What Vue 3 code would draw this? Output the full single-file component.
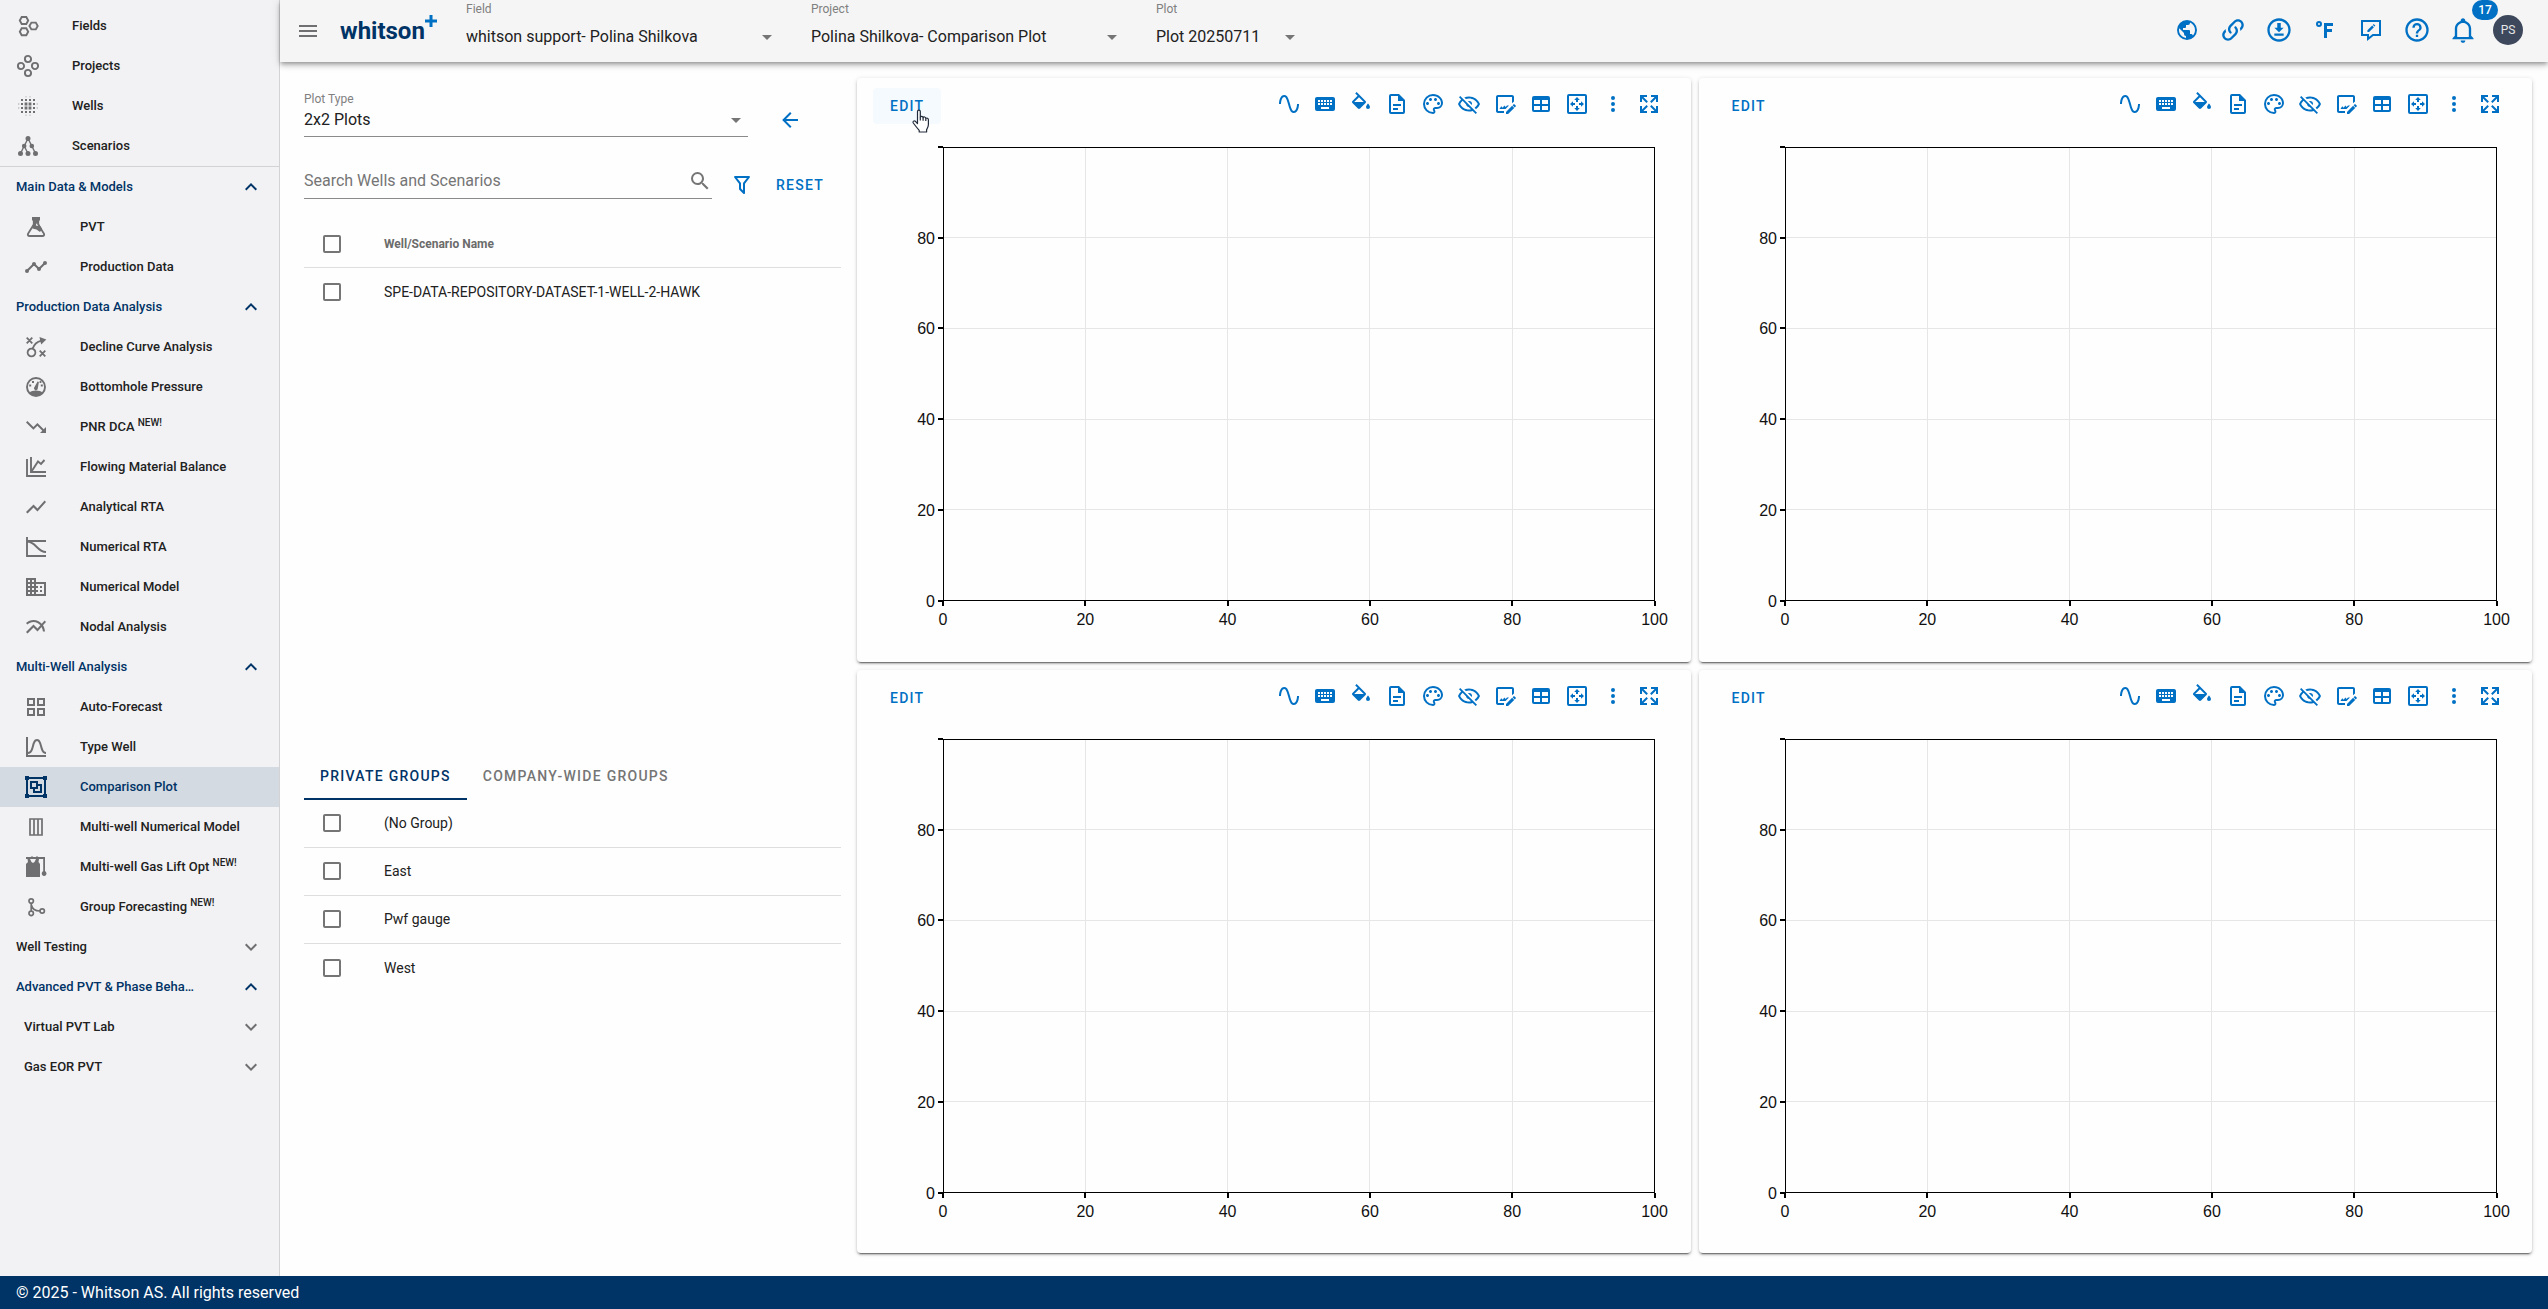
<script setup>
import { h, ref } from 'vue'

// f: filled outline, s: stroked line, w: stroke width (24 x 24 grid)
const icons = {
  menu: { f: 'M3,6H21V8H3V6M3,11H21V13H3V11M3,16H21V18H3V16Z' },
  hexes: { s: 'M5.7 3H10.3L12.2 6.5L10.3 10H5.7L3.8 6.5ZM5.7 14.2H10.3L12.2 17.7L10.3 21.2H5.7L3.8 17.7ZM15.4 8.6H19.8L21.7 12L19.8 15.4H15.4L13.4 12Z', w: 1.9 },
  circles: { s: 'M8.9 5a3.1 3.1 0 1 0 6.2 0a3.1 3.1 0 1 0 -6.2 0M1.9 12a3.1 3.1 0 1 0 6.2 0a3.1 3.1 0 1 0 -6.2 0M15.9 12a3.1 3.1 0 1 0 6.2 0a3.1 3.1 0 1 0 -6.2 0M8.9 19a3.1 3.1 0 1 0 6.2 0a3.1 3.1 0 1 0 -6.2 0', w: 1.9 },
  dots: { f: 'M5 5h2v2h-2zM9 5h2v2h-2zM13 5h2v2h-2zM17 5h2v2h-2zM5 9h2v2h-2zM8.6 8.6h2.8v2.8h-2.8zM12.6 8.6h2.8v2.8h-2.8zM17 9h2v2h-2zM5 13h2v2h-2zM8.6 12.6h2.8v2.8h-2.8zM12.6 12.6h2.8v2.8h-2.8zM17 13h2v2h-2zM5 17h2v2h-2zM9 17h2v2h-2zM13 17h2v2h-2zM17 17h2v2h-2zM9.6 2.4h.8v.8h-.8zM13.6 2.4h.8v.8h-.8zM9.6 20.8h.8v.8h-.8zM13.6 20.8h.8v.8h-.8zM2.4 9.6h.8v.8h-.8zM2.4 13.6h.8v.8h-.8zM20.8 9.6h.8v.8h-.8zM20.8 13.6h.8v.8h-.8z' },
  tree: { f: 'M9.5 4.5a2.5 2.5 0 1 0 5 0a2.5 2.5 0 1 0 -5 0M5.9 12a2.3 2.3 0 1 0 4.6 0a2.3 2.3 0 1 0 -4.6 0M13.5 12a2.3 2.3 0 1 0 4.6 0a2.3 2.3 0 1 0 -4.6 0M2 19.5a2.5 2.5 0 1 0 5 0a2.5 2.5 0 1 0 -5 0M9.5 19.5a2.5 2.5 0 1 0 5 0a2.5 2.5 0 1 0 -5 0M17 19.5a2.5 2.5 0 1 0 5 0a2.5 2.5 0 1 0 -5 0', s: 'M12 4.5L8.2 12L4.5 19.5M12 4.5L15.8 12L19.5 19.5M8.2 12L12 19.5', w: 1.4 },
  flask: { f: 'M8 2H16V5.5H15V9L18.2 14L16 17L12.5 14.5L8.4 13.6L9 9V5.5H8ZM12 9.8a1.2 1.2 0 1 0 2.4 0a1.2 1.2 0 1 0 -2.4 0', s: 'M9.8 5V9.5L4.1 18.6C3.5 19.8 4 21 5.5 21H18.5C20 21 20.5 19.8 19.9 18.6L14.2 9.5V5', w: 1.9 },
  timeline: { f: 'M3,14L3.5,14.07L8.07,9.5C7.89,8.85 8.06,8.11 8.59,7.59C9.37,6.8 10.63,6.8 11.41,7.59C11.94,8.11 12.11,8.85 11.93,9.5L14.5,12.07L15,12C15.18,12 15.35,12 15.5,12.07L19.07,8.5C19,8.35 19,8.18 19,8A2,2 0 0,1 21,6A2,2 0 0,1 23,8A2,2 0 0,1 21,10C20.82,10 20.65,10 20.5,9.93L16.93,13.5C17,13.65 17,13.82 17,14A2,2 0 0,1 15,16A2,2 0 0,1 13,14L13.07,13.5L10.5,10.93C10.18,11 9.82,11 9.5,10.93L4.93,15.5L5,16A2,2 0 0,1 3,18A2,2 0 0,1 1,16A2,2 0 0,1 3,14Z' },
  strategy: { f: 'M15.5 2L22.3 4.6L17.2 9.5L16.4 6.6Z', s: 'M2.7 2.7L8.3 8.3M8.3 2.7L2.7 8.3M15.7 15.7L21.3 21.3M21.3 15.7L15.7 21.3M3.6 17.5a3.9 3.9 0 1 0 7.8 0a3.9 3.9 0 1 0 -7.8 0M8.6 13.8C9.8 9.8 12.6 6.8 17.5 5.6', w: 1.8 },
  gauge: { f: 'M5 18C8.5 14.8 15.5 14.8 19 18C16.5 21.7 7.5 21.7 5 18ZM13.6 6.5L14.9 7L13.8 13.2A1.9 1.9 0 1 1 10.5 12.1ZM5.2 9.5h2v2h-2zM8 6h2v2h-2zM16.8 9.5h2v2h-2zM15.6 6h1.8v2h-1.8z', s: 'M3 12a9 9 0 1 0 18 0a9 9 0 1 0 -18 0', w: 1.9 },
  down: { f: 'M16,18L18.29,15.71L13.41,10.83L9.41,14.83L2,7.41L3.41,6L9.41,12L13.41,8L19.71,14.29L22,12V18H16Z' },
  flowing: { s: 'M3 4V21H22M7 2V17H22M7.5 16.5L14 6.5L17 9L20.5 5', w: 1.9 },
  line: { f: 'M3.5,18.5L9.5,12.5L13.5,16.5L22,6.92L20.59,5.5L13.5,13.5L9.5,9.5L2,17L3.5,18.5Z' },
  numrta: { s: 'M3 2V21H22M3 6H22M3 6.5C12 6.5 13 17 22 17', w: 1.9 },
  domain: { f: 'M18,15H16V17H18M18,11H16V13H18M20,19H12V17H14V15H12V13H14V11H12V9H20M10,7H8V5H10M10,11H8V9H10M10,15H8V13H10M10,19H8V17H10M6,7H4V5H6M6,11H4V9H6M6,15H4V13H6M6,19H4V17H6M12,7V3H2V21H22V7H12Z' },
  multiline: { f: 'M22 6.92l-1.41-1.41-2.85 3.21C15.68 6.4 12.83 5 9.61 5 6.72 5 4.07 6.16 2 8l1.42 1.42C5.12 7.93 7.27 7 9.61 7c2.74 0 5.09 1.26 6.77 3.24l-2.88 3.24-4-4L2 16.99l1.5 1.5 6-6.01 4 4 4.05-4.55c.75 1.35 1.25 2.9 1.44 4.55H21c-.22-2.3-.95-4.39-2.04-6.14L22 6.92z' },
  grid: { f: 'M3 11H11V3H3M5 5H9V9H5M13 21H21V13H13M15 15H19V19H15M3 21H11V13H3M5 15H9V19H5M13 3V11H21V3M19 9H15V5H19Z' },
  bell_curve: { f: 'M9.96,11.31C10.82,8.1 11.5,6 13,6C14.5,6 15.18,8.1 16.04,11.31C17,14.92 18.1,19 22,19V17C19.8,17 19,14.54 17.97,10.8C17.08,7.46 16.15,4 13,4C9.85,4 8.92,7.46 8.03,10.8C7.03,14.54 6.2,17 4,17V2H2V22H22V20H4V19C7.9,19 9,14.92 9.96,11.31Z' },
  group: { f: 'M1,1V5H2V19H1V23H5V22H19V23H23V19H22V5H23V1H19V2H5V1M5,4H19V5H20V19H19V20H5V19H4V5H5M6,6V14H9V18H18V9H14V6M8,8H12V12H8M14,11H16V16H11V14H14' },
  columns: { s: 'M6 4H18V20H6ZM10 4V20M14 4V20', w: 1.7 },
  gaslift: { f: 'M2 2H7V1.5H9V2H12V1.5H14V2H21V16.3A2.4 2.4 0 1 1 19.2 16.3V4H15L14.5 7L16 9V22H2V9L4 7L3.5 4H2ZM6 4L7.5 7L9 8L10.5 7L12 4Z' },
  merge: { s: 'M5 6a2.2 2.2 0 1 0 4.4 0a2.2 2.2 0 1 0 -4.4 0M5 18.4a2.2 2.2 0 1 0 4.4 0a2.2 2.2 0 1 0 -4.4 0M16 16a2.2 2.2 0 1 0 4.4 0a2.2 2.2 0 1 0 -4.4 0M7.2 8.2V16.2M7.4 10C8.2 14.6 11.5 16 16 16', w: 1.7 },
  up: { f: 'M7.41,15.41L12,10.83L16.59,15.41L18,14L12,8L6,14L7.41,15.41Z' },
  chevron: { f: 'M7.41,8.58L12,13.17L16.59,8.58L18,10L12,16L6,10L7.41,8.58Z' },
  caret: { f: 'M7,10L12,15L17,10H7Z' },
  back: { f: 'M20,11V13H8L13.5,18.5L12.08,19.92L4.16,12L12.08,4.08L13.5,5.5L8,11H20Z' },
  search: { f: 'M9.5,3A6.5,6.5 0 0,1 16,9.5C16,11.11 15.41,12.59 14.44,13.73L14.71,14H15.5L20.5,19L19,20.5L14,15.5V14.71L13.73,14.44C12.59,15.41 11.11,16 9.5,16A6.5,6.5 0 0,1 3,9.5A6.5,6.5 0 0,1 9.5,3M9.5,5C7,5 5,7 5,9.5C5,12 7,14 9.5,14C12,14 14,12 14,9.5C14,7 12,5 9.5,5Z' },
  filter: { f: 'M15,19.88C15.04,20.18 14.94,20.5 14.71,20.71C14.32,21.1 13.69,21.1 13.3,20.71L9.29,16.7C9.06,16.47 8.96,16.16 9,15.87V10.75L4.21,4.62C3.87,4.19 3.95,3.56 4.38,3.22C4.57,3.08 4.78,3 5,3H19C19.22,3 19.43,3.08 19.62,3.22C20.05,3.56 20.13,4.19 19.79,4.62L15,10.75V19.88M7.04,5L11,10.06V15.58L13,17.58V10.05L16.96,5H7.04Z' },
  sine: { f: 'M16.5,21C13.5,21 12.31,16.76 11.05,12.28C10.14,9.04 9,5 7.5,5C4.11,5 4,11.93 4,12H2C2,11.63 2.06,3 7.5,3C10.5,3 11.71,7.25 12.97,11.74C13.83,14.8 15,19 16.5,19C19.94,19 20.03,12.07 20.03,12H22.03C22.03,12.37 21.97,21 16.5,21Z' },
  keyboard: { f: 'M19,10H17V8H19M19,13H17V11H19M16,10H14V8H16M16,13H14V11H16M16,17H8V15H16M7,10H5V8H7M7,13H5V11H7M8,11H10V13H8M8,8H10V10H8M11,11H13V13H11M11,8H13V10H11M20,5H4C2.89,5 2,5.89 2,7V17A2,2 0 0,0 4,19H20A2,2 0 0,0 22,17V7C22,5.89 21.1,5 20,5Z' },
  fill: { f: 'M19,11.5C19,11.5 17,13.67 17,15A2,2 0 0,0 19,17A2,2 0 0,0 21,15C21,13.67 19,11.5 19,11.5M5.21,10L10,5.21L14.79,10M16.56,8.94L7.62,0L6.21,1.41L8.59,3.79L3.44,8.94C2.85,9.5 2.85,10.47 3.44,11.06L8.94,16.56C9.23,16.85 9.62,17 10,17C10.38,17 10.77,16.85 11.06,16.56L16.56,11.06C17.15,10.47 17.15,9.5 16.56,8.94Z' },
  document: { f: 'M6,2A2,2 0 0,0 4,4V20A2,2 0 0,0 6,22H18A2,2 0 0,0 20,20V8L14,2H6M6,4H13V9H18V20H6V4M8,12V14H16V12H8M8,16V18H13V16H8Z' },
  palette: { f: 'M12,22A10,10 0 0,1 2,12A10,10 0 0,1 12,2C17.5,2 22,6 22,11A6,6 0 0,1 16,17H14.2C13.9,17 13.7,17.2 13.7,17.5C13.7,17.6 13.8,17.7 13.8,17.8C14.2,18.3 14.4,18.9 14.4,19.5C14.5,20.9 13.4,22 12,22M12,4A8,8 0 0,0 4,12A8,8 0 0,0 12,20C12.3,20 12.5,19.8 12.5,19.5C12.5,19.3 12.4,19.2 12.4,19.1C12,18.6 11.8,18.1 11.8,17.5C11.8,16.1 12.9,15 14.3,15H16A4,4 0 0,0 20,11C20,7.1 16.4,4 12,4M6.5,10C7.3,10 8,10.7 8,11.5C8,12.3 7.3,13 6.5,13C5.7,13 5,12.3 5,11.5C5,10.7 5.7,10 6.5,10M9.5,6C10.3,6 11,6.7 11,7.5C11,8.3 10.3,9 9.5,9C8.7,9 8,8.3 8,7.5C8,6.7 8.7,6 9.5,6M14.5,6C15.3,6 16,6.7 16,7.5C16,8.3 15.3,9 14.5,9C13.7,9 13,8.3 13,7.5C13,6.7 13.7,6 14.5,6M17.5,10C18.3,10 19,10.7 19,11.5C19,12.3 18.3,13 17.5,13C16.7,13 16,12.3 16,11.5C16,10.7 16.7,10 17.5,10Z' },
  eyeoff: { f: 'M2,5.27L3.28,4L20,20.72L18.73,22L15.65,18.92C14.5,19.3 13.28,19.5 12,19.5C7,19.5 2.73,16.39 1,12C1.69,10.24 2.79,8.69 4.19,7.46L2,5.27M12,9A3,3 0 0,1 15,12C15,12.35 14.94,12.69 14.83,13L11,9.17C11.31,9.06 11.65,9 12,9M12,4.5C17,4.5 21.27,7.61 23,12C22.18,14.08 20.79,15.88 19,17.19L17.58,15.76C18.94,14.82 20.06,13.54 20.82,12C19.17,8.64 15.76,6.5 12,6.5C10.91,6.5 9.84,6.68 8.84,7L7.3,5.47C8.74,4.85 10.33,4.5 12,4.5M3.18,12C4.83,15.36 8.24,17.5 12,17.5C12.69,17.5 13.37,17.43 14,17.29L11.72,15C10.29,14.85 9.15,13.71 9,12.28L5.6,8.87C4.61,9.72 3.78,10.78 3.18,12Z' },
  imageedit: { f: 'M22.7 14.4L21.7 15.4L19.6 13.3L20.6 12.3C20.8 12.1 21.2 12.1 21.4 12.3L22.7 13.6C22.9 13.8 22.9 14.2 22.7 14.4M13 19.9V22H15.1L21.2 15.9L19.1 13.8L13 19.9M11 21H5C3.9 21 3 20.11 3 19V5C3 3.9 3.9 3 5 3H19C20.11 3 21 3.9 21 5V9.4L19 11.3V5H5V19H11V21M6.5 17L8.2 14.2L9.8 15.8L11.3 13.6L12.6 15L14 13.5H16L12.5 17Z' },
  table: { f: 'M5,4H19A2,2 0 0,1 21,6V18A2,2 0 0,1 19,20H5A2,2 0 0,1 3,18V6A2,2 0 0,1 5,4M5,8V12H11V8H5M13,8V12H19V8H13M5,14V18H11V14H5M13,14V18H19V14H13Z' },
  fit: { f: 'M4 2H20A2 2 0 0 1 22 4V20A2 2 0 0 1 20 22H4A2 2 0 0 1 2 20V4A2 2 0 0 1 4 2M4 4V20H20V4ZM12 5L14.8 8H13V10H11V8H9.2ZM12 19L9.2 16H11V14H13V16H14.8ZM5 12L8 9.2V11H10V13H8V14.8ZM19 12L16 14.8V13H14V11H16V9.2Z' },
  more: { f: 'M10 6a2 2 0 1 0 4 0a2 2 0 1 0 -4 0M10 12a2 2 0 1 0 4 0a2 2 0 1 0 -4 0M10 18a2 2 0 1 0 4 0a2 2 0 1 0 -4 0' },
  expand: { f: 'M9.5,13.09L10.91,14.5L6.41,19H10V21H3V14H5V17.59L9.5,13.09M10.91,9.5L9.5,10.91L5,6.41V10H3V3H10V5H6.41L10.91,9.5M14.5,13.09L19,17.59V14H21V21H14V19H17.59L13.09,14.5L14.5,13.09M13.09,9.5L17.59,5H14V3H21V10H19V6.41L14.5,10.91L13.09,9.5Z' },
  earth: { f: 'M17.9,17.39C17.64,16.59 16.89,16 16,16H15V13A1,1 0 0,0 14,12H8V10H10A1,1 0 0,0 11,9V7H13A2,2 0 0,0 15,5V4.59C17.93,5.77 20,8.64 20,12C20,14.08 19.2,15.97 17.9,17.39M11,19.93C7.05,19.44 4,16.08 4,12C4,11.38 4.08,10.78 4.21,10.21L9,15V16A2,2 0 0,0 11,18M12,2A10,10 0 0,0 2,12A10,10 0 0,0 12,22A10,10 0 0,0 22,12A10,10 0 0,0 12,2Z' },
  link: { f: 'M10.59,13.41C11,13.8 11,14.44 10.59,14.83C10.2,15.22 9.56,15.22 9.17,14.83C7.22,12.88 7.22,9.71 9.17,7.76L12.71,4.22C14.66,2.27 17.83,2.27 19.78,4.22C21.73,6.17 21.73,9.34 19.78,11.29L18.29,12.78C18.3,11.96 18.17,11.14 17.89,10.36L18.36,9.88C19.54,8.71 19.54,6.81 18.36,5.64C17.19,4.46 15.29,4.46 14.12,5.64L10.59,9.17C9.41,10.34 9.41,12.24 10.59,13.41M13.41,9.17C13.8,8.78 14.44,8.78 14.83,9.17C16.78,11.12 16.78,14.29 14.83,16.24L11.29,19.78C9.34,21.73 6.17,21.73 4.22,19.78C2.27,17.83 2.27,14.66 4.22,12.71L5.71,11.22C5.7,12.04 5.83,12.86 6.11,13.65L5.64,14.12C4.46,15.29 4.46,17.19 5.64,18.36C6.81,19.54 8.71,19.54 9.88,18.36L13.41,14.83C14.59,13.66 14.59,11.76 13.41,10.59C13,10.2 13,9.56 13.41,9.17Z' },
  download: { f: 'M8 17V15H16V17H8M16 10L12 14L8 10H10.5V6H13.5V10H16M12 2C17.5 2 22 6.5 22 12C22 17.5 17.5 22 12 22C6.5 22 2 17.5 2 12C2 6.5 6.5 2 12 2M12 4C7.58 4 4 7.58 4 12C4 16.42 7.58 20 12 20C16.42 20 20 16.42 20 12C20 7.58 16.42 4 12 4Z' },
  fahrenheit: { f: 'M11,20V5H20V8H14V11H19V14H14V20H11M6,3A3,3 0 0,1 9,6A3,3 0 0,1 6,9A3,3 0 0,1 3,6A3,3 0 0,1 6,3M6,5A1,1 0 0,0 5,6A1,1 0 0,0 6,7A1,1 0 0,0 7,6A1,1 0 0,0 6,5Z' },
  feedback: { f: 'M8.4 14V12.3L13.2 7.5L14.9 9.2L10.1 14ZM13.8 6.9L14.7 6L16.4 7.7L15.5 8.6Z', s: 'M3 3H21V17H14L9 21V17H3Z', w: 2 },
  help: { f: 'M11,18H13V16H11V18M12,2A10,10 0 0,0 2,12A10,10 0 0,0 12,22A10,10 0 0,0 22,12A10,10 0 0,0 12,2M12,20C7.59,20 4,16.41 4,12C4,7.59 7.59,4 12,4C16.41,4 20,7.59 20,12C20,16.41 16.41,20 12,20M12,6A4,4 0 0,0 8,10H10A2,2 0 0,1 12,8A2,2 0 0,1 14,10C14,12 11,11.75 11,15H13C13,12.75 16,12.5 16,10A4,4 0 0,0 12,6Z' },
  bell: { f: 'M10 21H14C14 22.1 13.1 23 12 23S10 22.1 10 21M21 19V20H3V19L5 17V11C5 7.9 7 5.2 10 4.3V4C10 2.9 10.9 2 12 2S14 2.9 14 4V4.3C17 5.2 19 7.9 19 11V17L21 19M17 11C17 8.2 14.8 6 12 6S7 8.2 7 11V18H17V11Z' },
}

const Icon = (props) => {
  const icon = icons[props.name]
  const size = props.size || 24
  return h('svg', { width: size, height: size, viewBox: '0 0 24 24', 'aria-hidden': 'true' }, [
    icon.f && h('path', { d: icon.f, fill: 'currentColor', 'fill-rule': 'evenodd' }),
    icon.s && h('path', { d: icon.s, fill: 'none', stroke: 'currentColor', 'stroke-width': icon.w }),
  ])
}
Icon.props = ['name', 'size']

const topLinks = [
  { icon: 'hexes', label: 'Fields' },
  { icon: 'circles', label: 'Projects' },
  { icon: 'dots', label: 'Wells' },
  { icon: 'tree', label: 'Scenarios' },
]

const sections = [
  { title: 'Main Data & Models', open: true, items: [
    { icon: 'flask', label: 'PVT' },
    { icon: 'timeline', label: 'Production Data' },
  ] },
  { title: 'Production Data Analysis', open: true, items: [
    { icon: 'strategy', label: 'Decline Curve Analysis' },
    { icon: 'gauge', label: 'Bottomhole Pressure' },
    { icon: 'down', label: 'PNR DCA', fresh: true },
    { icon: 'flowing', label: 'Flowing Material Balance' },
    { icon: 'line', label: 'Analytical RTA' },
    { icon: 'numrta', label: 'Numerical RTA' },
    { icon: 'domain', label: 'Numerical Model' },
    { icon: 'multiline', label: 'Nodal Analysis' },
  ] },
  { title: 'Multi-Well Analysis', open: true, items: [
    { icon: 'grid', label: 'Auto-Forecast' },
    { icon: 'bell_curve', label: 'Type Well' },
    { icon: 'group', label: 'Comparison Plot', active: true },
    { icon: 'columns', label: 'Multi-well Numerical Model' },
    { icon: 'gaslift', label: 'Multi-well Gas Lift Opt', fresh: true },
    { icon: 'merge', label: 'Group Forecasting', fresh: true },
  ] },
  { title: 'Well Testing', open: false, items: [] },
  { title: 'Advanced PVT & Phase Beha…', open: true, items: [], children: ['Virtual PVT Lab', 'Gas EOR PVT'] },
]

const pickers = [
  { id: 'field', label: 'Field', value: 'whitson support- Polina Shilkova' },
  { id: 'project', label: 'Project', value: 'Polina Shilkova- Comparison Plot' },
  { id: 'plot', label: 'Plot', value: 'Plot 20250711', narrow: true },
]

const actions = [
  { icon: 'earth', label: 'Language', size: 24 },
  { icon: 'link', label: 'Copy link', size: 28 },
  { icon: 'download', label: 'Download', size: 28 },
  { icon: 'fahrenheit', label: 'Units', size: 24 },
  { icon: 'feedback', label: 'Feedback', size: 24 },
  { icon: 'help', label: 'Help', size: 28 },
  { icon: 'bell', label: 'Notifications', size: 28, badge: 17 },
]

const tools = [
  ['sine', 'Curves'], ['keyboard', 'Shortcuts'], ['fill', 'Fill'], ['document', 'Notes'],
  ['palette', 'Colors'], ['eyeoff', 'Hide'], ['imageedit', 'Edit image'], ['table', 'Table'],
  ['fit', 'Fit'], ['more', 'More'], ['expand', 'Full screen'],
]

const groups = ['(No Group)', 'East', 'Pwf gauge', 'West']
const ticks = [0, 20, 40, 60, 80, 100]
const search = ref('')
</script>

<template>
  <div class="app">
    <div class="shell">
      <nav class="sidebar">
        <div class="top-links">
          <a v-for="l in topLinks" :key="l.label" href="#" class="row link top">
            <Icon :name="l.icon" /><span>{{ l.label }}</span>
          </a>
        </div>
        <template v-for="s in sections" :key="s.title">
          <button type="button" class="row heading" :class="{ open: s.open }">
            <span>{{ s.title }}</span><Icon :name="s.open ? 'up' : 'chevron'" />
          </button>
          <a v-for="i in s.items" :key="i.label" href="#" class="row link" :class="{ active: i.active }">
            <Icon :name="i.icon" /><span>{{ i.label }} <sup v-if="i.fresh">NEW!</sup></span>
          </a>
          <button v-for="c in s.children" :key="c" type="button" class="row heading nested">
            <span>{{ c }}</span><Icon name="chevron" />
          </button>
        </template>
      </nav>

      <div class="main">
        <header class="bar">
          <button type="button" class="icon-btn menu" aria-label="Menu"><Icon name="menu" /></button>
          <a href="#" class="logo">whitson<svg class="plus" width="12" height="12" viewBox="0 0 12 12" aria-hidden="true"><path d="M4.5 0h3v4.5H12v3H7.5V12h-3V7.5H0v-3h4.5z" fill="currentColor" /></svg></a>
          <div class="pickers">
            <div v-for="p in pickers" :key="p.id" class="picker" :class="{ narrow: p.narrow }">
              <label :for="p.id">{{ p.label }}</label>
              <div class="select">
                <select :id="p.id"><option>{{ p.value }}</option></select>
                <Icon name="caret" class="caret" />
              </div>
            </div>
          </div>
          <div class="actions">
            <button v-for="a in actions" :key="a.icon" type="button" class="icon-btn action" :aria-label="a.label">
              <Icon :name="a.icon" :size="a.size" />
              <span v-if="a.badge" class="badge">{{ a.badge }}</span>
            </button>
            <button type="button" class="avatar">PS</button>
          </div>
        </header>

        <div class="content">
          <aside class="panel">
            <div class="type-row">
              <div class="plot-type">
                <label for="type">Plot Type</label>
                <div class="select">
                  <select id="type"><option>2x2 Plots</option></select>
                  <Icon name="caret" class="caret" />
                </div>
              </div>
              <button type="button" class="icon-btn blue" aria-label="Collapse"><Icon name="back" /></button>
            </div>
            <div class="search-row">
              <div class="search">
                <input v-model="search" type="text" placeholder="Search Wells and Scenarios" aria-label="Search Wells and Scenarios" />
                <Icon name="search" />
              </div>
              <button type="button" class="icon-btn blue filter" aria-label="Filter"><Icon name="filter" /></button>
              <button type="button" class="text-btn reset">RESET</button>
            </div>
            <div class="wells">
              <table>
                <thead>
                  <tr><th class="tick"><input type="checkbox" aria-label="Select all" /></th><th>Well/Scenario Name</th></tr>
                </thead>
                <tbody>
                  <tr>
                    <td class="tick"><input id="well-1" type="checkbox" /></td>
                    <td><label for="well-1">SPE-DATA-REPOSITORY-DATASET-1-WELL-2-HAWK</label></td>
                  </tr>
                </tbody>
              </table>
            </div>
            <div class="groups">
              <div class="tabs" role="tablist">
                <button type="button" role="tab" class="tab selected" aria-selected="true">PRIVATE GROUPS</button>
                <button type="button" role="tab" class="tab" aria-selected="false">COMPANY-WIDE GROUPS</button>
              </div>
              <table>
                <tbody>
                  <tr v-for="(g, n) in groups" :key="g">
                    <td class="tick"><input :id="'group-' + n" type="checkbox" /></td>
                    <td><label :for="'group-' + n">{{ g }}</label></td>
                  </tr>
                </tbody>
              </table>
            </div>
          </aside>

          <main class="plots">
            <section v-for="n in 4" :key="n" class="card">
              <div class="toolbar">
                <button type="button" class="text-btn edit" :class="{ hovered: n === 1 }">
                  EDIT
                  <svg v-if="n === 1" class="pointer" width="18" height="24" viewBox="0 0 18 24" aria-hidden="true">
                    <path d="M5.5 14.5V2.6C5.5 .6 8.3 .6 8.3 2.6V8.3C8.6 6.9 11 7 11.1 8.6C11.7 7.5 13.7 7.8 13.8 9.4C14.7 8.7 16.4 9.2 16.4 10.8V15.5C16.4 18 15 19.5 14.6 20.8V23H7.2V21.3C5.5 19.5 3.5 17 1.3 14C.4 12.4 2.2 11.2 3.4 12.3Z" fill="#fff" stroke="#222b3a" stroke-width="1.2" stroke-linejoin="round" />
                    <path d="M8.3 8.3V11.5M11.1 8.6V11.8M13.8 9.4V12" fill="none" stroke="#222b3a" stroke-width="1.2" />
                  </svg>
                </button>
                <div class="tools">
                  <button v-for="t in tools" :key="t[0]" type="button" class="icon-btn tool" :aria-label="t[1]"><Icon :name="t[0]" /></button>
                </div>
              </div>
              <div class="chart">
                <svg class="plot" width="100%" height="100%">
                  <g class="gridlines">
                    <template v-for="t in ticks.slice(1, 5)" :key="t">
                      <line :x1="t + '%'" :x2="t + '%'" y1="0" y2="100%" />
                      <line x1="0" x2="100%" :y1="t + '%'" :y2="t + '%'" />
                    </template>
                  </g>
                  <rect class="frame" width="100%" height="100%" />
                  <g v-for="t in ticks" :key="t" class="axis">
                    <svg :x="t + '%'" y="100%" overflow="visible">
                      <line y1="0" y2="5" /><text y="24" text-anchor="middle">{{ t }}</text>
                    </svg>
                    <svg x="0" :y="100 - t + '%'" overflow="visible">
                      <line x1="-5" x2="0" /><text v-if="t < 100" x="-8" y="6" text-anchor="end">{{ t }}</text>
                    </svg>
                  </g>
                </svg>
              </div>
            </section>
          </main>
        </div>
      </div>
    </div>
    <footer class="footer">© 2025 - Whitson AS. All rights reserved</footer>
  </div>
</template>

<style>
body { background: #fefefe; }
</style>

<style scoped>
.app {
  min-height: 100vh;
  display: flex;
  flex-direction: column;
  font-family: Roboto, "Liberation Sans", sans-serif;
  color: #212121;
}
.app * { box-sizing: border-box; }
button, input, select { font-family: inherit; color: inherit; }
button { border: 0; padding: 0; background: none; cursor: pointer; }
a { text-decoration: none; color: inherit; }
svg { display: block; flex: none; }
.shell { flex: 1; display: flex; }

.sidebar {
  flex: 0 0 280px;
  background: #f2f2f4;
  border-right: 1px solid #d3d3d5;
  font-size: 13px;
  font-weight: 500;
}
.top-links { padding-top: 6px; border-bottom: 1px solid #d3d3d5; }
.row {
  display: flex;
  align-items: center;
  width: 100%;
  height: 40px;
  font-size: 13px;
  font-weight: 500;
  line-height: 20px;
}
.link { gap: 32px; padding: 0 24px; white-space: nowrap; }
.link.top { padding: 0 16px; }
.link svg { color: #6f6f71; }
.link.active { background: #d3dae1; color: #003366; }
.link.active svg { color: #003366; }
sup { font-size: 10px; line-height: 0; }
.heading { justify-content: space-between; padding: 0 16px; text-align: left; white-space: nowrap; }
.heading svg { color: #6f6f71; }
.heading.open, .heading.open svg { color: #003366; }
.heading.nested { padding-left: 24px; }

.main { flex: 1; min-width: 0; display: flex; flex-direction: column; }
.bar {
  position: relative;
  display: flex;
  align-items: center;
  height: 62px;
  padding: 0 25px 0 16px;
  background: #f5f5f5;
  box-shadow: 0 2px 4px -1px rgba(0, 0, 0, .3), 0 4px 5px rgba(0, 0, 0, .14), 0 1px 10px rgba(0, 0, 0, .12);
}
.icon-btn { display: flex; align-items: center; justify-content: center; flex: none; }
.menu { color: #6f6f71; }
.logo {
  display: flex;
  align-items: center;
  width: 126px;
  margin-left: 20px;
  font-size: 24px;
  line-height: 32px;
  font-weight: 700;
  color: #003366;
}
.plus { color: #0070c4; align-self: flex-start; }
.pickers { display: flex; gap: 32px; align-self: flex-start; }
.picker { width: 313px; }
.picker.narrow { width: 146px; }
label { display: block; }
.picker > label, .plot-type > label { font-size: 12px; line-height: 18px; color: #808080; }
.select { position: relative; }
select {
  display: block;
  width: 100%;
  padding: 0;
  border: 0;
  background: none;
  appearance: none;
  font-size: 16px;
  line-height: 24px;
}
.picker select { margin-top: 7px; }
.caret { position: absolute; right: 0; bottom: 0; color: #757575; pointer-events: none; }
.actions { display: flex; align-items: center; gap: 18px; margin-left: auto; padding-bottom: 2px; color: #0070c4; }
.action { position: relative; width: 28px; height: 28px; }
.badge {
  position: absolute;
  left: 23px;
  top: -16px;
  width: 26px;
  height: 20px;
  border-radius: 10px;
  background: #0070c4;
  color: #fff;
  font-size: 12px;
  line-height: 20px;
  font-weight: 500;
}
.avatar { width: 30px; height: 30px; margin-left: -2px; border-radius: 50%; background: #3e485c; color: #e4e6ea; font-size: 12px; }

.content { flex: 1; display: flex; gap: 16px; padding: 16px 16px 23px 24px; }
.panel { flex: 0 0 537px; display: flex; flex-direction: column; }
.type-row { display: flex; align-items: flex-start; gap: 30px; padding-top: 12px; }
.plot-type { flex: 0 0 444px; height: 47px; border-bottom: 1px solid #8a8a8a; }
.type-row .icon-btn { margin-top: 18px; }
.blue { color: #0070c4; }
.search-row { display: flex; align-items: center; height: 83px; padding-top: 12px; }
.search {
  flex: 0 0 408px;
  display: flex;
  align-items: center;
  height: 38px;
  padding-top: 4px;
  border-bottom: 1px solid #8a8a8a;
  color: #757575;
  margin-bottom: 10px;
}
.search input { flex: 1; min-width: 0; padding: 0; border: 0; outline: 0; background: none; font-size: 16px; line-height: 24px; color: #212121; }
.search input::placeholder { color: #757575; opacity: 1; }
.filter { margin-left: 18px; }
.text-btn { font-size: 14px; line-height: 36px; font-weight: 500; letter-spacing: 0.09em; color: #0070c4; }
.reset { margin-left: 22px; }
.wells { flex: 1 1 0; margin-bottom: 30px; }
.groups { flex: 1 1 0; }
table { width: 100%; border-collapse: separate; border-spacing: 0; }
th, td { height: 48px; padding: 0; text-align: left; font-size: 14px; line-height: 20px; font-weight: 400; }
th { font-size: 12px; font-weight: 700; color: #6b6b6b; }
.tick { width: 80px; padding-left: 19px; }
th, .groups tr:not(:last-child) td { border-bottom: 1px solid #dedede; }
input[type="checkbox"] {
  display: block;
  width: 18px;
  height: 18px;
  margin: 0;
  border: 2px solid #757575;
  border-radius: 2px;
  appearance: none;
}
.tabs { display: flex; }
.tab { height: 48px; padding: 2px 16px 0; font-size: 14px; font-weight: 500; letter-spacing: 0.09em; color: #757575; border-bottom: 2px solid transparent; }
.tab.selected { color: #003366; border-bottom-color: #003366; }

.plots { flex: 1; min-width: 0; display: grid; grid-template-columns: 1fr 1fr; grid-template-rows: 1fr 1fr; gap: 8px; }
.card {
  display: flex;
  flex-direction: column;
  min-width: 0;
  border-radius: 4px;
  background: #fefefe;
  box-shadow: 0 3px 1px -2px rgba(0, 0, 0, .4), 0 2px 2px rgba(0, 0, 0, .2), 0 1px 5px rgba(0, 0, 0, .14);
}
.toolbar { display: flex; justify-content: space-between; padding: 10px 24px 0 16px; }
.edit { position: relative; height: 36px; padding: 0 17px; border-radius: 4px; }
.edit.hovered { background: #f5faff; }
.pointer { position: absolute; left: 39px; top: 21px; }
.tools { display: flex; color: #0070c4; }
.tool { width: 36px; height: 32px; }
.chart { flex: 1; display: flex; padding: 23px 36px 61px 86px; min-height: 200px; }
.plot { flex: 1; min-width: 0; height: auto; overflow: visible; }
.gridlines line { stroke: #e6e6e6; shape-rendering: crispEdges; }
.frame { fill: none; stroke: #000; shape-rendering: crispEdges; }
.axis line { stroke: #000; stroke-width: 2; shape-rendering: crispEdges; }
.axis svg { display: inline; }
.axis text { font-family: "Liberation Sans", Arial, sans-serif; font-size: 16px; fill: #111; }

.footer { height: 33px; padding: 0 16px; background: #003366; color: #fff; font-size: 16px; line-height: 34px; font-weight: 400; }
</style>
